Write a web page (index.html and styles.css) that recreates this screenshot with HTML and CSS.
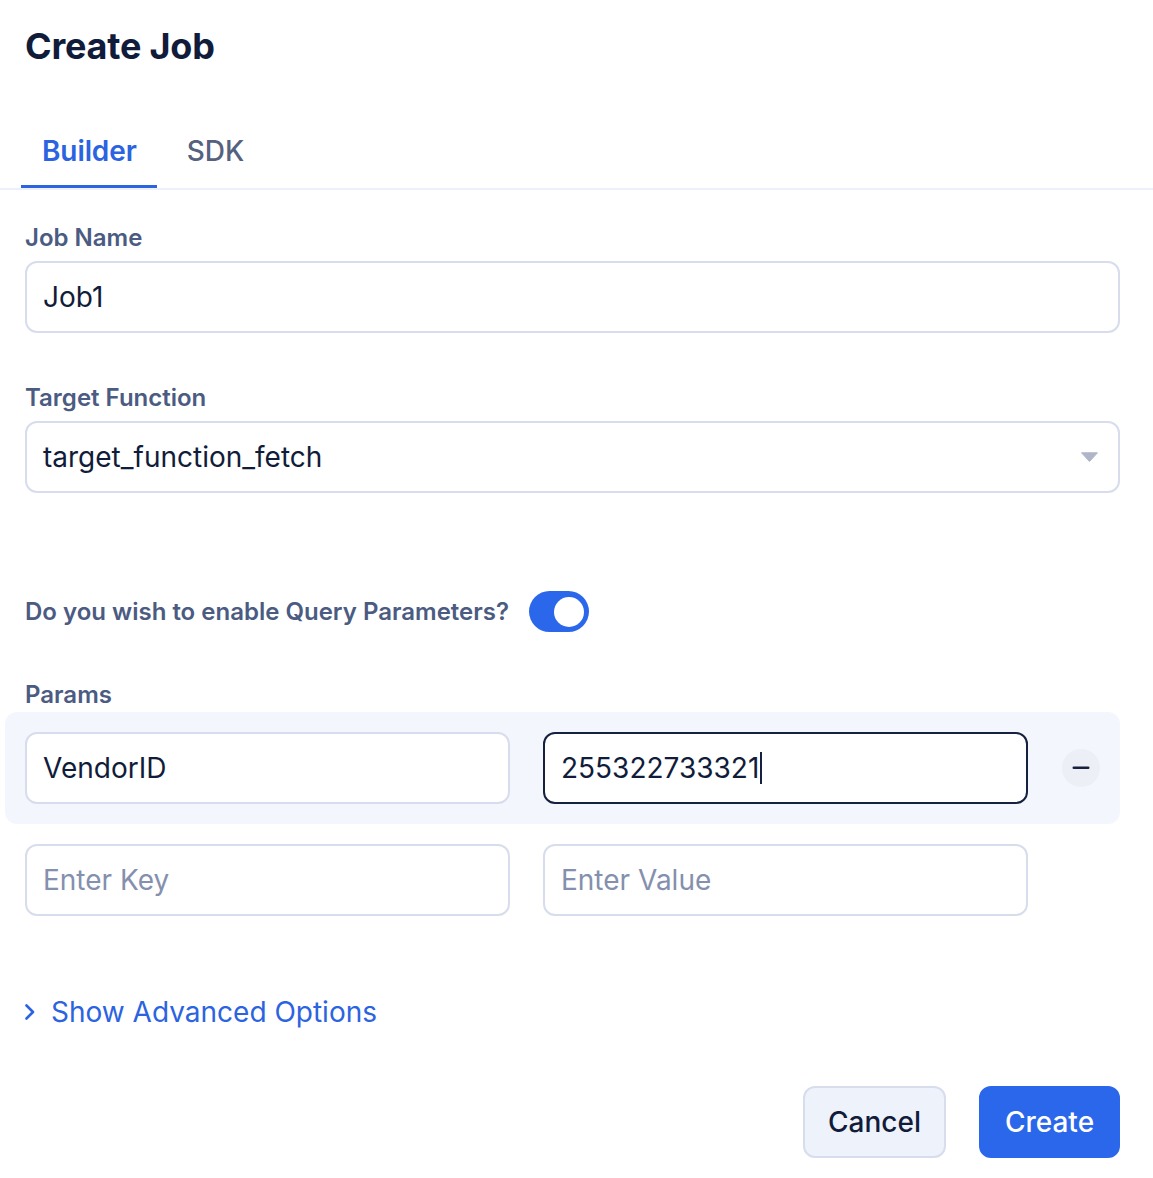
FILE: index.html
```html
<!DOCTYPE html>
<html lang="en">
<head>
<meta charset="utf-8">
<title>Create Job</title>
<link rel="stylesheet" href="styles.css">
</head>
<body>
<div class="page">
  <h1 class="title">Create Job</h1>
  <div class="tabs">
    <div class="tab active">Builder</div>
    <div class="tab">SDK</div>
  </div>
  <div class="content">
    <div class="group">
      <div class="label">Job Name</div>
      <div class="field"><span class="value">Job1</span></div>
    </div>
    <div class="group">
      <div class="label">Target Function</div>
      <div class="field select">
        <span class="value">target_function_fetch</span>
        <svg class="arrow" width="17" height="10" viewBox="0 0 17 10"><path d="M0.5 0.8 H16.5 L8.5 9.5 Z" fill="#b0b6c7" stroke="#b0b6c7" stroke-width="1" stroke-linejoin="round"/></svg>
      </div>
    </div>
    <div class="toggle-row">
      <div class="label">Do you wish to enable Query Parameters?</div>
      <div class="toggle"><div class="knob"></div></div>
    </div>
    <div class="params">
      <div class="label">Params</div>
      <div class="param-row hover">
        <div class="field half"><span class="value">VendorID</span></div>
        <div class="field half focused"><span class="value">255322733321</span><span class="caret"></span></div>
        <div class="remove">
          <svg width="18" height="4" viewBox="0 0 18 4"><rect x="0.5" y="0.5" width="17" height="2.6" rx="1.3" fill="#16213f"/></svg>
        </div>
      </div>
      <div class="param-row">
        <div class="field half"><span class="placeholder">Enter Key</span></div>
        <div class="field half"><span class="placeholder">Enter Value</span></div>
        <div class="remove-spacer"></div>
      </div>
    </div>
    <div class="advanced">
      <svg class="chev" width="12" height="18" viewBox="0 0 12 18"><path d="M2.5 2.5 L9 9 L2.5 15.5" fill="none" stroke="#2b63e0" stroke-width="2.6" stroke-linecap="round" stroke-linejoin="round"/></svg>
      <span>Show Advanced Options</span>
    </div>
    <div class="actions">
      <button class="btn cancel">Cancel</button>
      <button class="btn create">Create</button>
    </div>
  </div>
</div>
</body>
</html>
```
FILE: styles.css
```css
* { box-sizing: border-box; }
html, body { margin: 0; padding: 0; background: #ffffff; }
body {
  font-family: Inter, "Noto Sans", "Liberation Sans", sans-serif;
  color: #111c3a;
}
.page { width: 1153px; }
.title {
  margin: 0;
  padding: 24px 0 0 25px;
  font-size: 36px;
  line-height: 44px;
  font-weight: 700;
  color: #111c3a;
  letter-spacing: -0.2px;
}
.tabs {
  display: flex;
  gap: 9px;
  margin-top: 66px;
  padding-left: 21px;
  border-bottom: 2px solid #ebf0fa;
}
.tab {
  padding: 0 21px 17px;
  font-size: 28px;
  line-height: 34px;
  font-weight: 500;
  color: #55617f;
  border-bottom: 3px solid transparent;
}
.tab.active {
  padding: 0 20px 17px 21px;
  color: #2b63e0;
  font-weight: 600;
  letter-spacing: -0.1px;
  border-bottom-color: #2b63e0;
}
.content {
  padding: 33px 33px 0 25px;
}
.label {
  font-size: 24px;
  line-height: 30px;
  font-weight: 600;
  color: #4b5b82;
}
.group + .group { margin-top: 50px; }
.group .label { margin-bottom: 8px; }
.field {
  display: flex;
  align-items: center;
  height: 72px;
  padding: 0 16px;
  border: 2px solid #d7ddec;
  border-radius: 12px;
  background: #fff;
  font-size: 28px;
  line-height: 34px;
  color: #111c3a;
}
.select { justify-content: space-between; padding-right: 20px; }
.arrow { display: block; }
.toggle-row {
  display: flex;
  align-items: center;
  gap: 20px;
  margin-top: 98px;
}
.toggle {
  width: 60px;
  height: 41px;
  border-radius: 21px;
  background: #2b67eb;
  display: flex;
  align-items: center;
  justify-content: flex-end;
  padding: 0 5px;
}
.knob {
  width: 30px;
  height: 30px;
  border-radius: 50%;
  background: #fff;
}
.params { margin-top: 48px; }
.params .label { margin-bottom: 2px; }
.param-row {
  display: flex;
  align-items: center;
  gap: 33px;
  margin-left: -20px;
  padding: 20px;
  border-radius: 12px;
}
.param-row.hover { background: #f3f6fc; }
.half { width: 485px; flex: none; }
.focused { border-color: #16213f; }
.caret {
  display: inline-block;
  width: 2px;
  height: 32px;
  background: #16213f;
  margin-left: 1px;
}
.remove {
  width: 38px;
  height: 38px;
  border-radius: 50%;
  background: #eceff6;
  display: flex;
  align-items: center;
  justify-content: center;
  margin-left: 1px;
}
.remove svg { display: block; }
.remove-spacer { width: 38px; height: 38px; }
.placeholder { color: #8490ad; }
.advanced {
  display: flex;
  align-items: center;
  gap: 15px;
  margin-top: 59px;
  font-size: 28px;
  line-height: 34px;
  color: #2b63e0;
}
.chev { display: block; margin-left: -1px; }
.actions {
  display: flex;
  justify-content: flex-end;
  gap: 33px;
  margin-top: 57px;
}
.btn {
  height: 72px;
  border-radius: 12px;
  font-family: Inter, "Noto Sans", "Liberation Sans", sans-serif;
  font-size: 28px;
  font-weight: 500;
  line-height: 34px;
  padding: 0;
  cursor: pointer;
}
.cancel {
  width: 143px;
  background: #eef2fb;
  border: 2px solid #d7ddec;
  color: #111c3a;
}
.create {
  width: 141px;
  background: #2b67eb;
  border: 2px solid #2b67eb;
  color: #fff;
}
```
